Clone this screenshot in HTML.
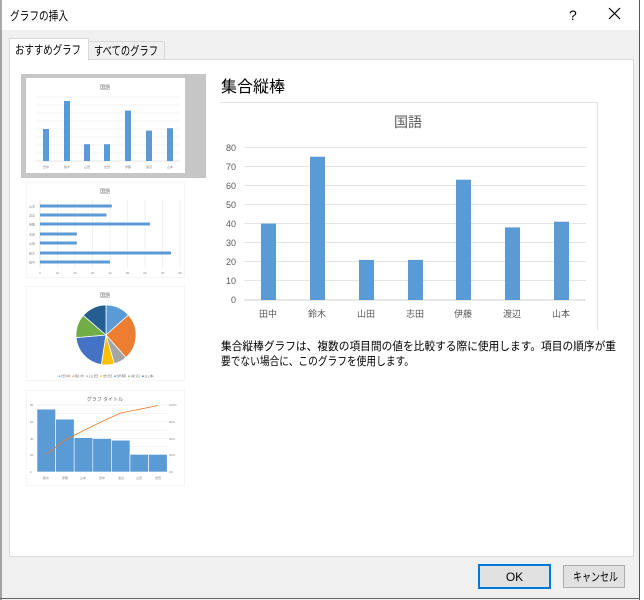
<!DOCTYPE html>
<html><head><meta charset="utf-8"><style>
html,body{margin:0;padding:0;width:644px;height:600px;overflow:hidden;background:#f0f0f0;}
body{font-family:"Liberation Sans","Noto Sans CJK JP",sans-serif;}
svg text{font-family:"Liberation Sans","Noto Sans CJK JP",sans-serif;}
</style></head><body>
<svg width="644" height="600" viewBox="0 0 644 600" xmlns="http://www.w3.org/2000/svg">
<rect x="0" y="0" width="644" height="600" fill="#f0f0f0"/>
<rect x="0" y="0" width="640" height="30" fill="#fff"/>
<line x1="1" y1="0" x2="1" y2="600" stroke="#555"/>
<line x1="639.5" y1="0" x2="639.5" y2="600" stroke="#555"/>
<rect x="640" y="0" width="4" height="600" fill="#fff"/>
<line x1="0" y1="598.5" x2="640" y2="598.5" stroke="#666"/>
<text x="10" y="20" font-size="12" fill="#000" textLength="58" lengthAdjust="spacingAndGlyphs">グラフの挿入</text>
<text x="569" y="20" font-size="14" fill="#000">?</text>
<path d="M609 8 L620 19 M620 8 L609 19" stroke="#000" stroke-width="1.2"/>
<!-- tabs -->
<rect x="88.5" y="41.5" width="76" height="18" fill="#f0f0f0" stroke="#d9d9d9"/>
<text x="94" y="55" font-size="12" fill="#000" textLength="64" lengthAdjust="spacingAndGlyphs">すべてのグラフ</text>
<rect x="9.5" y="59.5" width="624" height="497" fill="#fff" stroke="#d9d9d9"/>
<rect x="9.5" y="38.5" width="79" height="22" fill="#fff" stroke="#d9d9d9"/>
<rect x="10" y="58" width="78" height="4" fill="#fff"/>
<text x="15" y="54" font-size="12" fill="#000" textLength="66" lengthAdjust="spacingAndGlyphs">おすすめグラフ</text>

<!-- thumb1 -->
<rect x="21" y="74" width="185" height="104" fill="#c6c6c6"/>
<rect x="26" y="78" width="159" height="95" fill="#fff"/>
<text x="105" y="89" font-size="5" fill="#666" text-anchor="middle">国語</text>
<g stroke="#e6e6e6" stroke-width="0.5">
<line x1="36" y1="97" x2="180" y2="97"/><line x1="36" y1="105" x2="180" y2="105"/><line x1="36" y1="113" x2="180" y2="113"/><line x1="36" y1="121" x2="180" y2="121"/><line x1="36" y1="129" x2="180" y2="129"/><line x1="36" y1="137" x2="180" y2="137"/><line x1="36" y1="145" x2="180" y2="145"/><line x1="36" y1="153" x2="180" y2="153"/><line x1="36" y1="161" x2="180" y2="161" stroke="#ccc"/>
</g>
<g fill="#5b9bd5">
<rect x="43" y="129" width="6" height="32"/><rect x="64" y="101" width="6" height="60"/><rect x="84" y="144.2" width="6" height="16.8"/><rect x="104" y="144.2" width="6" height="16.8"/><rect x="125" y="110.6" width="6" height="50.4"/><rect x="146" y="130.6" width="6" height="30.4"/><rect x="167" y="128.2" width="6" height="32.8"/>
</g>
<g font-size="3" fill="#888" text-anchor="middle">
<text x="46" y="168">田中</text><text x="67" y="168">鈴木</text><text x="87" y="168">山田</text><text x="107" y="168">志田</text><text x="128" y="168">伊藤</text><text x="149" y="168">渡辺</text><text x="170" y="168">山本</text>
</g>

<!-- thumb2 -->
<rect x="26.5" y="182.5" width="158" height="95" fill="#fff" stroke="#f5f5f5"/>
<text x="105" y="193" font-size="5" fill="#666" text-anchor="middle">国語</text>
<g stroke="#e6e6e6" stroke-width="0.5">
<line x1="57.5" y1="200" x2="57.5" y2="268"/><line x1="75" y1="200" x2="75" y2="268"/><line x1="92.5" y1="200" x2="92.5" y2="268"/><line x1="110" y1="200" x2="110" y2="268"/><line x1="127.5" y1="200" x2="127.5" y2="268"/><line x1="145" y1="200" x2="145" y2="268"/><line x1="162.5" y1="200" x2="162.5" y2="268"/><line x1="180" y1="200" x2="180" y2="268"/>
</g>
<line x1="40" y1="200" x2="40" y2="268" stroke="#ccc" stroke-width="0.5"/>
<g fill="#5b9bd5">
<rect x="40" y="204.5" width="71.8" height="3"/><rect x="40" y="213.5" width="66.5" height="3"/><rect x="40" y="222.5" width="110" height="3"/><rect x="40" y="232.5" width="36.8" height="3"/><rect x="40" y="241.5" width="36.8" height="3"/><rect x="40" y="251.5" width="131" height="3"/><rect x="40" y="260.5" width="70" height="3"/>
</g>
<g font-size="3" fill="#888">
<text x="29" y="207.5">山本</text><text x="29" y="216.5">渡辺</text><text x="29" y="225.5">伊藤</text><text x="29" y="235.5">志田</text><text x="29" y="244.5">山田</text><text x="29" y="254.5">鈴木</text><text x="29" y="263.5">田中</text>
</g>
<g font-size="3" fill="#888" text-anchor="middle">
<text x="40" y="274">0</text><text x="57.5" y="274">10</text><text x="75" y="274">20</text><text x="92.5" y="274">30</text><text x="110" y="274">40</text><text x="127.5" y="274">50</text><text x="145" y="274">60</text><text x="162.5" y="274">70</text><text x="180" y="274">80</text>
</g>

<!-- thumb3 pie -->
<rect x="26.5" y="286.5" width="158" height="94" fill="#fff" stroke="#f5f5f5"/>
<text x="105" y="297" font-size="5" fill="#666" text-anchor="middle">国語</text>
<g stroke="#fff" stroke-width="0.8">
<path d="M106 335 L106 305 A30 30 0 0 1 128.4 315 Z" fill="#5b9bd5"/>
<path d="M106 335 L128.4 315 A30 30 0 0 1 125.9 357.5 Z" fill="#ed7d31"/>
<path d="M106 335 L125.9 357.5 A30 30 0 0 1 114.4 363.8 Z" fill="#a5a5a5"/>
<path d="M106 335 L114.4 363.8 A30 30 0 0 1 101.3 364.6 Z" fill="#ffc000"/>
<path d="M106 335 L101.3 364.6 A30 30 0 0 1 76.1 337.6 Z" fill="#4472c4"/>
<path d="M106 335 L76.1 337.6 A30 30 0 0 1 83.3 315.4 Z" fill="#70ad47"/>
<path d="M106 335 L83.3 315.4 A30 30 0 0 1 106 305 Z" fill="#255e91"/>
</g>
<text x="58" y="377" font-size="3" fill="#888" textLength="96" lengthAdjust="spacingAndGlyphs"><tspan fill="#5b9bd5">●</tspan>田中 <tspan fill="#ed7d31">●</tspan>鈴木 <tspan fill="#a5a5a5">●</tspan>山田 <tspan fill="#ffc000">●</tspan>志田 <tspan fill="#4472c4">●</tspan>伊藤 <tspan fill="#70ad47">●</tspan>渡辺 <tspan fill="#255e91">●</tspan>山本</text>

<!-- thumb4 pareto -->
<rect x="26.5" y="390.5" width="158" height="95" fill="#fff" stroke="#f5f5f5"/>
<text x="105" y="401" font-size="5" fill="#666" text-anchor="middle">グラフ タイトル</text>
<g stroke="#e6e6e6" stroke-width="0.5">
<line x1="37" y1="405" x2="167" y2="405"/><line x1="37" y1="413.4" x2="167" y2="413.4"/><line x1="37" y1="421.8" x2="167" y2="421.8"/><line x1="37" y1="430.1" x2="167" y2="430.1"/><line x1="37" y1="438.5" x2="167" y2="438.5"/><line x1="37" y1="446.9" x2="167" y2="446.9"/><line x1="37" y1="455.3" x2="167" y2="455.3"/><line x1="37" y1="463.6" x2="167" y2="463.6"/>
</g>
<g fill="#5b9bd5" stroke="#fff" stroke-width="0.6">
<rect x="37" y="409.2" width="18.6" height="62.8"/><rect x="55.6" y="419.2" width="18.6" height="52.8"/><rect x="74.2" y="437.7" width="18.6" height="34.3"/><rect x="92.8" y="438.5" width="18.6" height="33.5"/><rect x="111.4" y="440.2" width="18.6" height="31.8"/><rect x="130" y="454.4" width="18.6" height="17.6"/><rect x="148.6" y="454.4" width="18.6" height="17.6"/>
</g>
<polyline points="46.3,454.4 64.9,440 83.5,430.6 102.1,421.5 120.7,413 139.3,409.3 157.9,405.5" fill="none" stroke="#ed7d31" stroke-width="0.8"/>
<g font-size="3" fill="#888">
<text x="30" y="406">80</text><text x="30" y="423">60</text><text x="30" y="440">40</text><text x="30" y="456">20</text><text x="30" y="473">0</text>
<text x="169" y="406">100%</text><text x="169" y="423">80%</text><text x="169" y="440">60%</text><text x="169" y="456">30%</text><text x="169" y="473">0%</text>
</g>
<g font-size="3" fill="#888" text-anchor="middle">
<text x="46" y="479">鈴木</text><text x="65" y="479">伊藤</text><text x="83" y="479">山本</text><text x="102" y="479">田中</text><text x="121" y="479">渡辺</text><text x="139" y="479">山田</text><text x="158" y="479">志田</text>
</g>

<!-- main -->
<text x="221" y="92" font-size="16" fill="#000">集合縦棒</text>
<path d="M220 102.5 H597.5 V330" fill="none" stroke="#e3e3e3"/>
<text x="408" y="127" font-size="14" fill="#595959" text-anchor="middle">国語</text>
<g stroke="#e4e4e4" stroke-width="1">
<line x1="244" y1="147.5" x2="586" y2="147.5"/><line x1="244" y1="166.5" x2="586" y2="166.5"/><line x1="244" y1="185.5" x2="586" y2="185.5"/><line x1="244" y1="204.5" x2="586" y2="204.5"/><line x1="244" y1="223.5" x2="586" y2="223.5"/><line x1="244" y1="242.5" x2="586" y2="242.5"/><line x1="244" y1="261.5" x2="586" y2="261.5"/><line x1="244" y1="280.5" x2="586" y2="280.5"/><line x1="244" y1="300" x2="586" y2="300" stroke="#d0d0d0"/>
</g>
<g fill="#5b9bd5">
<rect x="261" y="223.6" width="15" height="76.4"/><rect x="310" y="156.7" width="15" height="143.3"/><rect x="359" y="259.9" width="15" height="40.1"/><rect x="408" y="259.9" width="15" height="40.1"/><rect x="456" y="179.7" width="15" height="120.3"/><rect x="505" y="227.4" width="15" height="72.6"/><rect x="554" y="221.7" width="15" height="78.3"/>
</g>
<g font-size="9" fill="#595959" text-anchor="end">
<text x="236" y="151">80</text><text x="236" y="170">70</text><text x="236" y="189">60</text><text x="236" y="208">50</text><text x="236" y="227">40</text><text x="236" y="246">30</text><text x="236" y="265">20</text><text x="236" y="284">10</text><text x="236" y="303">0</text>
</g>
<g font-size="9" fill="#595959" text-anchor="middle">
<text x="268" y="317">田中</text><text x="317" y="317">鈴木</text><text x="366" y="317">山田</text><text x="415" y="317">志田</text><text x="463" y="317">伊藤</text><text x="512" y="317">渡辺</text><text x="561" y="317">山本</text>
</g>
<text x="221" y="350" font-size="11.5" fill="#000" textLength="395" lengthAdjust="spacingAndGlyphs">集合縦棒グラフは、複数の項目間の値を比較する際に使用します。項目の順序が重</text>
<text x="221" y="365" font-size="11.5" fill="#000" textLength="193" lengthAdjust="spacingAndGlyphs">要でない場合に、このグラフを使用します。</text>

<!-- buttons -->
<rect x="479" y="565" width="71" height="23" fill="#e1e1e1" stroke="#0078d7" stroke-width="2"/>
<text x="514.5" y="581" font-size="12" fill="#000" text-anchor="middle">OK</text>
<rect x="563.5" y="565.5" width="61" height="22" fill="#e1e1e1" stroke="#adadad"/>
<text x="573" y="581" font-size="12" fill="#000" textLength="45" lengthAdjust="spacingAndGlyphs">キャンセル</text>
</svg>
</body></html>
